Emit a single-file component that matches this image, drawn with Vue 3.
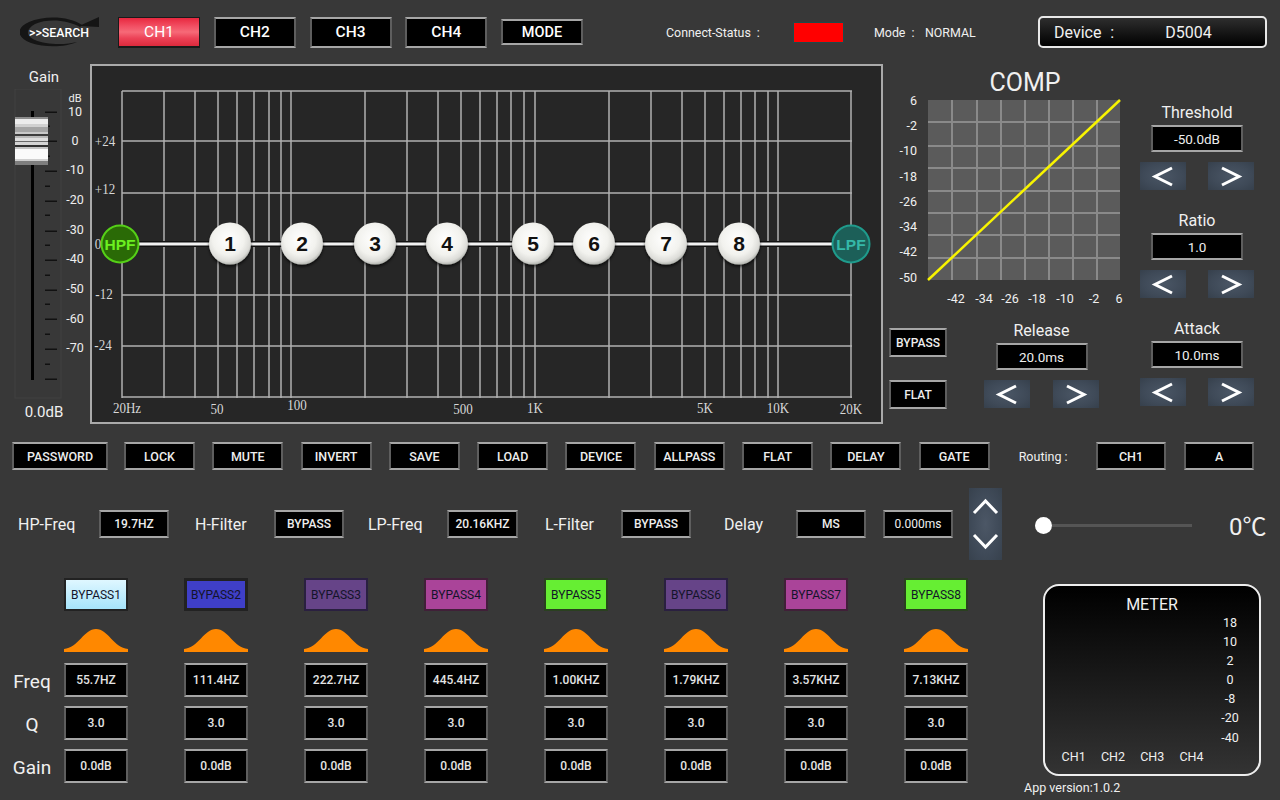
<script setup>
const channels = ['CH1', 'CH2', 'CH3', 'CH4', 'MODE']
const actions = ['LOCK', 'MUTE', 'INVERT', 'SAVE', 'LOAD', 'DEVICE', 'ALLPASS', 'FLAT', 'DELAY', 'GATE']
const vLines = [122, 164, 195, 218, 237, 254, 269, 281, 291, 365, 407, 438, 461, 480, 497, 511, 524, 535, 609, 651, 682, 705, 724, 741, 755, 768, 778, 851]
const hLines = [91, 141, 193, 295, 346, 397]
const dbLabels = [['+24', 105, 141], ['+12', 105, 189], ['0', 98, 244], ['-12', 104, 294], ['-24', 103, 345]]
const hzLabels = [['20Hz', 127, 408], ['50', 217, 409], ['100', 297, 405], ['500', 463, 409], ['1K', 535, 408], ['5K', 705, 408], ['10K', 778, 408], ['20K', 851, 409]]
const nodes = [[1, 230], [2, 302], [3, 375], [4, 447], [5, 533], [6, 594], [7, 666], [8, 739]]
const faderMajor = [112, 141, 171, 201, 231, 260, 290, 319, 349, 379]
const faderMinor = [126, 156, 186, 215, 245, 275, 304, 334, 364]
const faderLabels = [['10', 112], ['0', 141], ['-10', 170], ['-20', 200], ['-30', 230], ['-40', 259], ['-50', 289], ['-60', 319], ['-70', 348]]
const thumbBands = [
  [117, 2, '#8c8c8c'], [119, 5, '#ececec'], [124, 3, '#d0d0d0'], [127, 5, '#a4a4a4'],
  [132, 2, '#c8c8c8'], [134, 2, '#3c3c3c'], [136, 2, '#b8b8b8'], [138, 3, '#dedede'],
  [141, 1, '#6a6a6a'], [142, 3, '#d4d4d4'], [145, 2, '#303030'], [147, 2, '#c4c4c4'],
  [149, 10, '#fafafa'], [159, 2, '#cfcfcf'], [161, 4, '#7e7e7e']
]
const compV = [952, 977, 1001, 1025, 1049, 1073, 1097]
const compH = [122, 146, 168, 191, 213, 235, 258]
const compY = [['6', 101], ['-2', 126], ['-10', 151], ['-18', 177], ['-26', 202], ['-34', 227], ['-42', 252], ['-50', 278]]
const compX = [['-42', 956], ['-34', 984], ['-26', 1010], ['-18', 1037], ['-10', 1065], ['-2', 1094], ['6', 1119]]
const controls = [
  { label: 'Threshold', value: '-50.0dB' },
  { label: 'Ratio', value: '1.0' },
  { label: 'Attack', value: '10.0ms' }
]
const bands = [
  { name: 'BYPASS1', cls: 'b-light', freq: '55.7HZ' },
  { name: 'BYPASS2', cls: 'b-blue', freq: '111.4HZ' },
  { name: 'BYPASS3', cls: 'b-purple', freq: '222.7HZ' },
  { name: 'BYPASS4', cls: 'b-pink', freq: '445.4HZ' },
  { name: 'BYPASS5', cls: 'b-green', freq: '1.00KHZ' },
  { name: 'BYPASS6', cls: 'b-purple', freq: '1.79KHZ' },
  { name: 'BYPASS7', cls: 'b-pink', freq: '3.57KHZ' },
  { name: 'BYPASS8', cls: 'b-green', freq: '7.13KHZ' }
]
const meterScale = ['18', '10', '2', '0', '-8', '-20', '-40']
const meterCh = ['CH1', 'CH2', 'CH3', 'CH4']
</script>

<template>
  <div class="app">
    <header class="top">
      <div class="logo">
        <svg width="80" height="32" viewBox="20 16 80 32">
          <path class="logo-ring" d="M82 25 C70 16 44 15 29 22 C15 28 17 38 31 43 C46 48 66 47 77 42 C66 45 46 45 35 40 C25 36 26 29 35 24 C48 18 68 20 80 27 Z" />
          <polygon class="logo-ring" points="79,26 99,17 99,27" />
          <text class="logo-text" x="59" y="37" text-anchor="middle">&gt;&gt;SEARCH</text>
        </svg>
      </div>
      <div class="channels">
        <button v-for="(c, i) in channels" :key="c" class="bevel ch" :class="{ active: i === 0, mode: c === 'MODE' }">{{ c }}</button>
      </div>
      <span class="status-label">Connect-Status :</span>
      <span class="status-led"></span>
      <span class="mode-label">Mode :</span>
      <span class="mode-value">NORMAL</span>
      <div class="device"><span class="device-label">Device :</span><span class="device-name">D5004</span></div>
    </header>

    <section class="main">
      <div class="gain">
        <div class="gain-title">Gain</div>
        <svg width="90" height="310" viewBox="0 89 90 310">
          <rect class="fader-bg" x="15" y="89" width="46" height="309" />
          <rect x="31" y="111" width="3" height="269" fill="#000" />
          <rect v-for="y in faderMajor" :key="y" x="45" :y="y - 0.5" width="12" height="1.5" fill="#111" />
          <rect v-for="y in faderMinor" :key="y" x="45" :y="y - 0.5" width="5" height="1.5" fill="#111" />
          <text class="fader-label small" x="75" y="102" text-anchor="middle">dB</text>
          <text v-for="l in faderLabels" :key="l[0]" class="fader-label" x="75" :y="l[1] + 4" text-anchor="middle">{{ l[0] }}</text>
          <rect v-for="t in thumbBands" :key="t[0]" x="15" :y="t[0]" width="33" :height="t[1]" :fill="t[2]" />
        </svg>
        <div class="gain-value">0.0dB</div>
      </div>

      <div class="eq">
        <svg width="793" height="360" viewBox="90 64 793 360">
          <defs>
            <radialGradient id="ball" cx=".46" cy=".4" r=".62">
              <stop offset="0" stop-color="#ffffff" />
              <stop offset=".6" stop-color="#f2f2ee" />
              <stop offset=".85" stop-color="#dcdcd8" />
              <stop offset="1" stop-color="#a8aba5" />
            </radialGradient>
            <filter id="drop" x="-30%" y="-30%" width="160%" height="170%">
              <feDropShadow dx="0" dy="2" stdDeviation="1.5" flood-color="#000" flood-opacity=".7" />
            </filter>
          </defs>
          <rect class="eq-frame" x="91" y="65" width="791" height="358" />
          <line v-for="x in vLines" :key="x" class="grid-line" :x1="x" :x2="x" y1="91" y2="398" />
          <line v-for="y in hLines" :key="y" class="grid-line" x1="122" x2="852" :y1="y" :y2="y" />
          <text v-for="l in dbLabels" :key="l[0]" class="eq-label" :x="l[1]" :y="l[2] + 5" text-anchor="middle">{{ l[0] }}</text>
          <text v-for="l in hzLabels" :key="l[0]" class="eq-label" :x="l[1]" :y="l[2] + 5" text-anchor="middle">{{ l[0] }}</text>
          <rect x="120" y="241" width="731" height="6" fill="#111" />
          <rect x="120" y="242.5" width="731" height="3" fill="#f2f2f2" />
          <circle cx="120" cy="244" r="18.5" fill="#2a6a06" stroke="#55d017" stroke-width="2" />
          <text class="filter-text hpf" x="120" y="250" text-anchor="middle">HPF</text>
          <g v-for="n in nodes" :key="n[0]">
            <circle :cx="n[1]" cy="243.5" r="21" fill="url(#ball)" filter="url(#drop)" />
            <text class="node-text" :x="n[1]" y="251" text-anchor="middle">{{ n[0] }}</text>
          </g>
          <circle cx="851" cy="244" r="18.5" fill="#1c5f58" stroke="#1f9b8c" stroke-width="2" />
          <text class="filter-text lpf" x="851" y="250" text-anchor="middle">LPF</text>
        </svg>
      </div>

      <div class="side">
        <div class="side-left">
          <div class="comp-title">COMP</div>
          <svg width="239" height="214" viewBox="889 94 239 214">
            <rect x="928" y="100" width="192" height="180" fill="#5b5b5b" />
            <line v-for="x in compV" :key="x" class="comp-line" :x1="x" :x2="x" y1="100" y2="280" />
            <line v-for="y in compH" :key="y" class="comp-line" x1="928" x2="1120" :y1="y" :y2="y" />
            <line x1="928" y1="280" x2="1120" y2="100" stroke="#f8f400" stroke-width="2.5" />
            <text v-for="l in compY" :key="l[0]" class="comp-label" x="917" :y="l[1] + 4" text-anchor="end">{{ l[0] }}</text>
            <text v-for="l in compX" :key="l[0]" class="comp-label" :x="l[1]" y="303" text-anchor="middle">{{ l[0] }}</text>
          </svg>
          <div class="lower">
            <div class="lower-buttons">
              <button class="bevel small-btn">BYPASS</button>
              <button class="bevel small-btn">FLAT</button>
            </div>
            <div class="control release">
              <div class="control-label">Release</div>
              <div class="bevel control-value">20.0ms</div>
              <div class="arrows">
                <button class="arrow"><svg width="46" height="28"><polyline points="32,6 15,14.5 32,23" /></svg></button>
                <button class="arrow"><svg width="46" height="28"><polyline points="14,6 31,14.5 14,23" /></svg></button>
              </div>
            </div>
          </div>
        </div>
        <div class="side-right">
          <div v-for="c in controls" :key="c.label" class="control">
            <div class="control-label">{{ c.label }}</div>
            <div class="bevel control-value">{{ c.value }}</div>
            <div class="arrows">
              <button class="arrow"><svg width="46" height="28"><polyline points="32,6 15,14.5 32,23" /></svg></button>
              <button class="arrow"><svg width="46" height="28"><polyline points="14,6 31,14.5 14,23" /></svg></button>
            </div>
          </div>
        </div>
      </div>
    </section>

    <section class="actions">
      <button class="bevel act password">PASSWORD</button>
      <button v-for="a in actions" :key="a" class="bevel act">{{ a }}</button>
      <span class="routing">Routing :</span>
      <button class="bevel act route">CH1</button>
      <button class="bevel act route">A</button>
    </section>

    <section class="filters">
      <span class="f-label f1">HP-Freq</span>
      <div class="bevel f-box">19.7HZ</div>
      <span class="f-label f2">H-Filter</span>
      <div class="bevel f-box">BYPASS</div>
      <span class="f-label f3">LP-Freq</span>
      <div class="bevel f-box f-wide">20.16KHZ</div>
      <span class="f-label f4">L-Filter</span>
      <div class="bevel f-box">BYPASS</div>
      <span class="f-label f5">Delay</span>
      <div class="bevel f-box">MS</div>
      <div class="bevel f-box f-time">0.000ms</div>
      <button class="stepper">
        <svg width="33" height="72"><polyline points="5,25 16.5,13 28,25" /><polyline points="5,47 16.5,59 28,47" /></svg>
      </button>
      <div class="slider"><span class="thumb"></span><span class="track"></span></div>
      <span class="temp">0℃</span>
    </section>

    <section class="bands">
      <div class="band-labels">
        <span>Freq</span>
        <span>Q</span>
        <span>Gain</span>
      </div>
      <div v-for="b in bands" :key="b.name" class="band">
        <button class="bypass" :class="b.cls">{{ b.name }}</button>
        <svg class="bell" width="64" height="24" viewBox="0 0 64 24">
          <path d="M0 24 L0 21 C14 20 20 1 32 1 C44 1 50 20 64 21 L64 24 Z" fill="#ff8800" />
        </svg>
        <div class="bevel band-box">{{ b.freq }}</div>
        <div class="bevel band-box">3.0</div>
        <div class="bevel band-box">0.0dB</div>
      </div>
      <div class="meter-col">
        <div class="meter">
          <div class="meter-title">METER</div>
          <div class="meter-scale"><span v-for="s in meterScale" :key="s">{{ s }}</span></div>
          <div class="meter-ch"><span v-for="c in meterCh" :key="c">{{ c }}</span></div>
        </div>
        <div class="version">App version:1.0.2</div>
      </div>
    </section>
  </div>
</template>

<style scoped>
.app {
  width: 1280px;
  height: 800px;
  overflow: hidden;
  background: #383838;
  color: #f0f0f0;
  font-family: Roboto, "Noto Sans CJK SC", sans-serif;
  box-sizing: border-box;
}
svg { display: block; }
button { padding: 0; font-family: inherit; cursor: pointer; }
.bevel {
  box-sizing: border-box;
  display: flex;
  align-items: center;
  justify-content: center;
  background: #000;
  color: #eee;
  border: 2px solid #5e5e5e;
  border-top-color: #a6a6a6;
  border-bottom-color: #a6a6a6;
  font-weight: 500;
}

/* top bar */
.top {
  display: flex;
  align-items: center;
  height: 32px;
  padding-top: 16px;
  padding-left: 20px;
}
.logo { width: 80px; height: 32px; }
.logo-ring { fill: #151515; }
.logo-text { font-size: 12.3px; font-weight: 500; fill: #fff; }
.channels {
  display: grid;
  grid-template-columns: repeat(5, 82px);
  column-gap: 13.75px;
  align-items: center;
  margin-left: 18px;
}
.ch { height: 31px; font-size: 15.5px; color: #fff; }
.ch.mode { height: 26px; font-size: 14.5px; }
.ch.active {
  background: linear-gradient(#e8283f 0%, #f25064 30%, #f66a78 50%, #ec4257 72%, #dc2a3c 100%);
  border: 1px solid #1a1a1a;
  border-bottom-width: 2px;
  font-weight: 400;
}
.status-label { margin-left: 83px; width: 127px; font-size: 12.4px; word-spacing: 3px; padding-top: 1px; }
.status-led {
  box-sizing: border-box;
  width: 51px;
  height: 21px;
  background: #ff0000;
  border: 1px solid #1c4a4a;
}
.mode-label { margin-left: 30px; width: 51px; font-size: 12.4px; word-spacing: 3px; padding-top: 1px; }
.mode-value { font-size: 12.4px; width: 62px; padding-top: 1px; }
.device {
  box-sizing: border-box;
  display: flex;
  align-items: center;
  width: 229px;
  height: 32px;
  margin-left: 51px;
  padding-left: 14px;
  border: 2px solid #e8e8e8;
  border-radius: 5px;
  background: linear-gradient(#2e2e2e, #000);
  font-size: 16px;
}
.device-label { word-spacing: 5px; }
.device-name { margin-left: 51px; }

/* main */
.main { display: flex; height: 360px; margin-top: 16px; }
.gain { width: 90px; }
.gain-title { height: 25px; line-height: 26px; font-size: 15px; text-align: center; width: 88px; }
.gain-value { height: 25px; line-height: 26px; font-size: 15px; text-align: center; width: 88px; }
.fader-bg { fill: #383838; stroke: #414141; stroke-width: 1; }
.fader-label { font-size: 12.5px; fill: #eee; }
.fader-label.small { font-size: 11px; }
.eq { width: 793px; height: 360px; }
.eq-frame { fill: #262626; stroke: #aaa; stroke-width: 2; }
.grid-line { stroke: #b0b0b0; stroke-width: 1.5; }
.eq-label {
  font-family: "Liberation Serif", serif;
  font-size: 15.5px;
  fill: #d8d8d8;
  transform: scaleX(.84);
  transform-box: fill-box;
  transform-origin: center;
}
.filter-text { font-family: "Liberation Sans", sans-serif; font-weight: 700; font-size: 15.5px; }
.hpf { fill: #6cf020; }
.lpf { fill: #35b8a8; }
.node-text { font-family: "Liberation Sans", sans-serif; font-weight: 700; font-size: 21px; fill: #111; }

/* right panel */
.side { display: flex; margin-left: 6px; }
.side-left { width: 239px; margin-right: 12px; }
.comp-title { height: 30px; line-height: 38px; font-size: 25px; text-align: center; width: 272px; white-space: nowrap; }
.comp-line { stroke: #8a8a8a; stroke-width: 2; }
.comp-label { font-size: 12.5px; fill: #f0f0f0; }
.lower { display: flex; margin-top: 11px; }
.lower-buttons { display: flex; flex-direction: column; gap: 23px; margin-top: 9px; }
.small-btn { width: 58px; height: 29px; font-size: 12px; color: #eee; }
.release { margin-left: 37px; width: 115px; }
.side-right { display: flex; flex-direction: column; gap: 19px; padding-top: 37px; width: 114px; }
.control { display: flex; flex-direction: column; align-items: center; }
.control-label { height: 22px; line-height: 24px; margin-bottom: 2px; font-size: 16px; }
.control-value { width: 92px; height: 27px; font-size: 13.5px; font-weight: 400; }
.arrows { display: flex; justify-content: space-between; width: 100%; margin-top: 10px; }
.arrow {
  width: 46px;
  height: 28px;
  border: 0;
  background: radial-gradient(ellipse at center, #4a5665 0%, #3f4a58 60%, #36404c 100%);
}
.arrow polyline, .stepper polyline { fill: none; stroke: #fff; stroke-width: 3; }

/* action row */
.actions { display: flex; align-items: center; height: 28px; margin-top: 18px; padding-left: 12px; gap: 17.3px; }
.act { width: 71px; height: 28px; font-size: 12.5px; color: #eee; }
.password { width: 96px; margin-right: -1.3px; }
.routing { margin-left: 11.7px; width: 60px; font-size: 12.5px; }
.route { width: 70px; }
.route:last-child { margin-left: 1px; }

/* filter row */
.filters { display: flex; align-items: center; height: 72px; margin-top: 18px; }
.f-label { font-size: 16px; }
.f1 { width: 81px; padding-left: 18px; }
.f2 { width: 79px; padding-left: 26px; }
.f3 { width: 79px; padding-left: 24px; }
.f4 { width: 76px; padding-left: 27px; }
.f5 { width: 72px; padding-left: 33px; }
.f-box { width: 70px; height: 28px; font-size: 12px; color: #eee; }
.f-wide { width: 71px; }
.f-time { margin-left: 17px; font-weight: 400; }
.stepper {
  width: 33px;
  height: 72px;
  margin-left: 16px;
  border: 0;
  background: radial-gradient(ellipse at center, #4c5766 0%, #3f4a58 60%, #37414d 100%);
}
.slider { display: flex; align-items: center; width: 157px; margin-left: 33px; margin-top: 2px; }
.thumb { width: 17px; height: 17px; border-radius: 50%; background: #fff; flex: none; }
.track { flex: 1; height: 3px; background: #555; }
.temp { margin-left: 37px; font-size: 24px; white-space: nowrap; }

/* bands */
.bands { display: flex; margin-top: 18px; }
.band-labels {
  display: grid;
  grid-template-rows: repeat(3, 34px);
  row-gap: 9px;
  width: 64px;
  padding-top: 86px;
  font-size: 19px;
  text-align: center;
  align-items: center;
  flex: none;
}
.band { width: 64px; margin-right: 56px; display: flex; flex-direction: column; flex: none; }
.band:nth-of-type(9) { margin-right: 0; }
.bypass {
  box-sizing: border-box;
  width: 64px;
  height: 33px;
  border: 2px solid #222;
  font-size: 12px;
  color: #14142a;
}
.b-light { background: linear-gradient(#dff7ff, #a6e4fb); }
.b-blue { background: #3f3fc8; border-width: 3px; }
.b-purple { background: #664488; border-color: #2a2040; }
.b-pink { background: #aa4499; border-color: #402038; }
.b-green { background: #66ee33; border-color: #2a4020; }
.bell { margin-top: 17px; margin-bottom: 11px; }
.band-box { height: 34px; margin-bottom: 9px; font-size: 12px; color: #e4e4e4; }
.meter-col { padding-left: 75px; padding-top: 6px; flex: none; }
.meter {
  box-sizing: border-box;
  width: 218px;
  height: 192px;
  border: 2px solid #eee;
  border-radius: 16px;
  background: linear-gradient(#000, #333);
  display: grid;
  grid-template-columns: 1fr 62px;
  grid-template-rows: 27px 1fr 27px;
}
.meter-title { grid-column: 1 / 3; text-align: center; font-size: 16px; line-height: 38px; height: 27px; }
.meter-scale {
  grid-column: 2;
  grid-row: 2;
  display: flex;
  flex-direction: column;
  align-items: center;
  font-size: 12.5px;
  line-height: 19.1px;
  padding-left: 4px;
}
.meter-ch {
  grid-column: 1 / 3;
  grid-row: 3;
  display: grid;
  grid-template-columns: repeat(4, 39.3px);
  justify-items: center;
  padding-left: 9px;
  font-size: 12.5px;
  line-height: 20px;
}
.version { margin-left: -19px; margin-top: 4px; font-size: 12.5px; white-space: nowrap; }
</style>
